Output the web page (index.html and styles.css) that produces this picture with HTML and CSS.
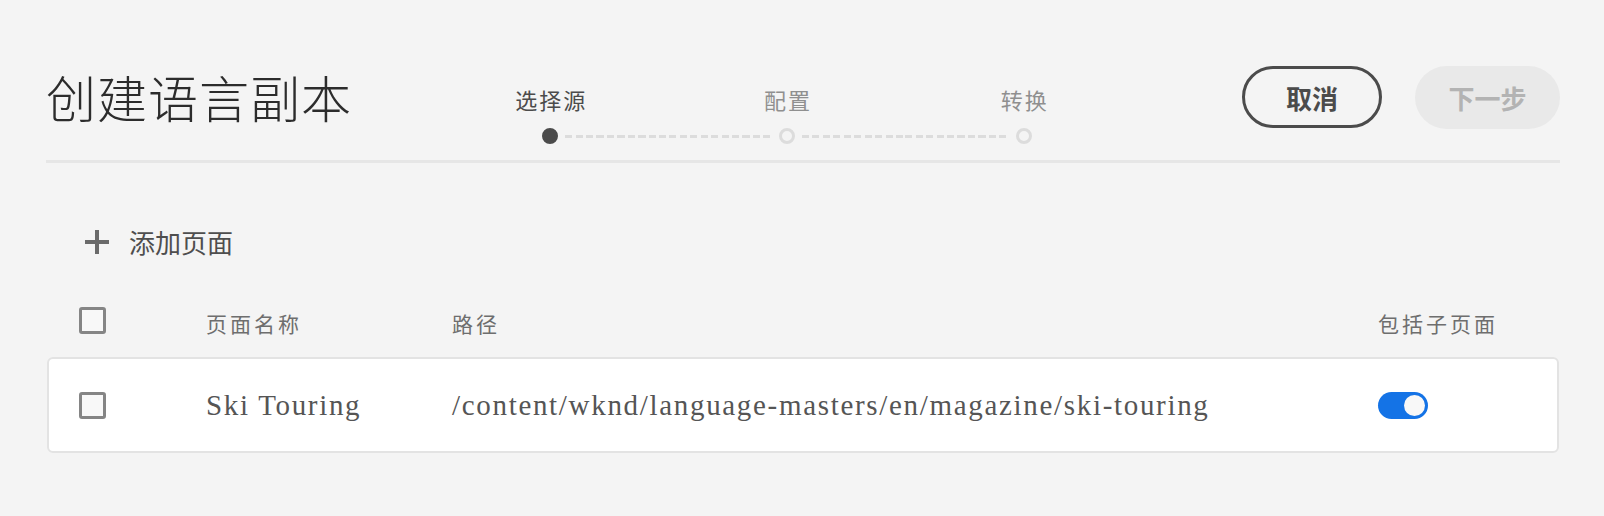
FILE: index.html
```html
<!DOCTYPE html>
<html lang="zh">
<head>
<meta charset="utf-8">
<title>创建语言副本</title>
<link rel="stylesheet" href="styles.css">
</head>
<body>
<div class="page">
  <header class="top">
    <h1 class="title">创建语言副本</h1>
    <div class="steps">
      <div class="step active">
        <div class="step-label">选择源</div>
        <div class="track"><span class="line hidden"></span><span class="dot"></span><span class="line"></span></div>
      </div>
      <div class="step">
        <div class="step-label">配置</div>
        <div class="track"><span class="line"></span><span class="dot"></span><span class="line"></span></div>
      </div>
      <div class="step">
        <div class="step-label">转换</div>
        <div class="track"><span class="line"></span><span class="dot"></span><span class="line hidden"></span></div>
      </div>
    </div>
    <div class="spacer"></div>
    <div class="actions">
      <button class="btn btn-cancel">取消</button>
      <button class="btn btn-next" disabled>下一步</button>
    </div>
  </header>

  <div class="add-row">
    <svg class="plus" width="24" height="24" viewBox="0 0 24 24"><path d="M12 0v24M0 12h24" stroke="#6a6a6a" stroke-width="4" fill="none"/></svg>
    <span class="add-label">添加页面</span>
  </div>

  <div class="thead">
    <div class="cell"><span class="checkbox"></span></div>
    <div class="cell th">页面名称</div>
    <div class="cell th">路径</div>
    <div class="cell th">包括子页面</div>
  </div>

  <div class="card">
    <div class="cell"><span class="checkbox"></span></div>
    <div class="cell td">Ski Touring</div>
    <div class="cell td">/content/wknd/language-masters/en/magazine/ski-touring</div>
    <div class="cell"><span class="toggle"><span class="knob"></span></span></div>
  </div>
</div>
</body>
</html>
```

FILE: styles.css
```css
* { box-sizing: border-box; }
html, body {
  margin: 0;
  padding: 0;
  background: #f4f4f4;
}
body {
  font-family: "Noto Sans CJK SC", "Noto Sans", sans-serif;
  width: 1604px;
  height: 516px;
  overflow: hidden;
}
.page {
  padding: 0 44px 0 46px;
}
.top {
  display: grid;
  grid-template-columns: 386px 710px 1fr auto;
  align-items: start;
  height: 163px;
  border-bottom: 3px solid #e6e6e6;
}
.title {
  margin: 66px 0 0 0;
  font-size: 50px;
  line-height: 60px;
  font-weight: 300;
  color: #2c2c2c;
  letter-spacing: 1px;
  white-space: nowrap;
}
.steps {
  display: flex;
  margin-top: 86px;
}
.step {
  flex: 1;
  display: flex;
  flex-direction: column;
}
.step-label {
  text-align: center;
  font-size: 22px;
  line-height: 26px;
  letter-spacing: 2px;
  padding-left: 2px;
  color: #8f8f8f;
}
.step.active .step-label { color: #4b4b4b; }
.track {
  display: flex;
  align-items: center;
  height: 16px;
  margin-top: 16px;
}
.line {
  flex: 1;
  height: 3px;
  background: repeating-linear-gradient(to right, #dcdcdc 0 7px, transparent 7px 10.5px);
}
.line.hidden { visibility: hidden; }
.dot {
  width: 16px;
  height: 16px;
  border-radius: 50%;
  border: 3px solid #dcdcdc;
  margin: 0 7px;
  flex: none;
}
.step.active .dot {
  background: #4b4b4b;
  border-color: #4b4b4b;
}
.actions {
  display: flex;
  gap: 33px;
  margin-top: 66px;
}
.btn {
  font-family: "Noto Sans CJK SC", sans-serif;
  font-size: 26px;
  font-weight: 700;
  display: flex;
  align-items: center;
  justify-content: center;
  padding: 0;
}
.btn-cancel {
  width: 140px;
  height: 62px;
  border: 3px solid #4b4b4b;
  border-radius: 31px;
  background: transparent;
  color: #4b4b4b;
}
.btn-next {
  width: 145px;
  height: 63px;
  border: none;
  border-radius: 32px;
  background: #e9e9e9;
  color: #b3b3b3;
}
.add-row {
  display: flex;
  align-items: center;
  height: 40px;
  margin-top: 59px;
  padding-left: 39px;
  gap: 20px;
}
.add-label {
  font-size: 26px;
  line-height: 40px;
  color: #4e4e4e;
}
.thead, .card {
  display: grid;
  grid-template-columns: 127px 246px 926px 1fr;
  align-items: center;
}
.thead {
  height: 40px;
  margin-top: 38px;
  padding-left: 33px;
}
.cell {
  display: flex;
  align-items: center;
  white-space: nowrap;
}
.th {
  font-size: 21px;
  letter-spacing: 3px;
  color: #6e6e6e;
  padding-top: 6px;
}
.checkbox {
  display: block;
  width: 27px;
  height: 27px;
  border: 3px solid #858585;
  border-radius: 3px;
  background: #f8f8f8;
}
.card {
  height: 96px;
  margin: 17px 1px 0 1px;
  padding-left: 30px;
  background: #ffffff;
  border: 2px solid #e3e3e3;
  border-radius: 6px;
}
.td {
  font-family: "Liberation Serif", serif;
  font-size: 29px;
  line-height: 32px;
  letter-spacing: 1.68px;
  color: #555555;
}
.toggle {
  display: flex;
  justify-content: flex-end;
  align-items: center;
  width: 50px;
  height: 27px;
  padding: 0 3px;
  border-radius: 14px;
  background: #1473e6;
}
.knob {
  width: 21px;
  height: 21px;
  border-radius: 50%;
  background: #f8f8f8;
}
```
